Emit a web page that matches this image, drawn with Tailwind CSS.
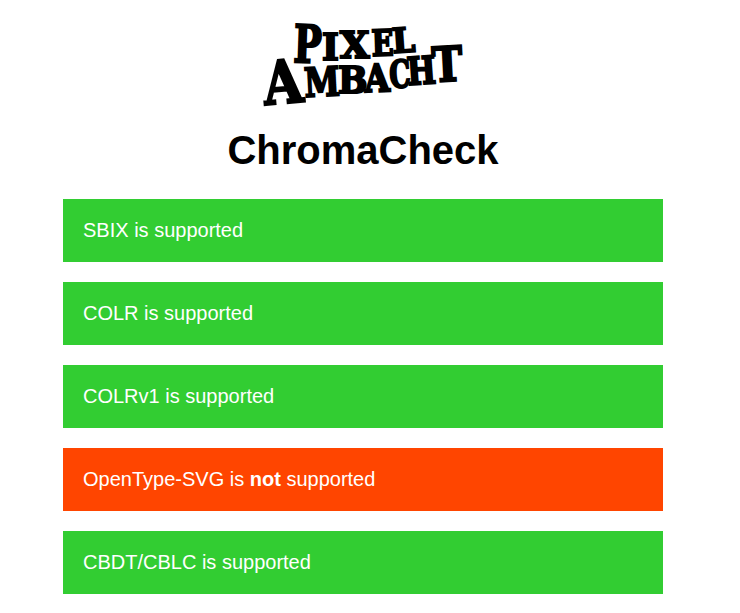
<!DOCTYPE html>
<html lang="en">
<head>
    <meta charset="UTF-8">
    <meta name="viewport" content="width=device-width, initial-scale=1.0">
    <title>ChromaCheck</title>
    <script src="https://cdn.jsdelivr.net/npm/@tailwindcss/browser@4"></script>
</head>
<body class="bg-white text-black font-['Liberation_Sans',Arial,sans-serif]">
    <div class="w-[600px] ml-[63px]">
        <svg class="block mx-auto mt-[20px] w-[210px] h-[90px] overflow-visible" viewBox="0 0 210 90" role="img" aria-label="Pixel Ambacht logo">
            <g class="font-['DejaVu_Serif',serif] font-bold" fill="#000" stroke="#000" stroke-width="2.2" stroke-linejoin="miter">
                <text font-size="52" transform="translate(35 42) rotate(2) scale(.72 1)">P</text>
                <text font-size="38" transform="translate(64 40) scale(.95 1)">I</text>
                <text font-size="38" transform="translate(82 38) scale(1 1)">X</text>
                <text font-size="36" transform="translate(114 36) rotate(-2) scale(.8 1)">E</text>
                <text font-size="34" transform="translate(135 33) rotate(-4) scale(.95 1)">L</text>
                <text font-size="60" transform="translate(7 85) rotate(-5) scale(.85 1)">A</text>
                <text font-size="40" transform="translate(47 77) rotate(-3) scale(.8 1)">M</text>
                <text font-size="38" transform="translate(80 73) scale(.92 1)">B</text>
                <text font-size="38" transform="translate(107 72) rotate(-2) scale(.85 1)">A</text>
                <text font-size="38" transform="translate(132 68) rotate(-3) scale(.7 1)">C</text>
                <text font-size="38" transform="translate(150 65) rotate(-4) scale(.8 1)">H</text>
                <text font-size="48" transform="translate(175 62) rotate(-3) scale(.85 1)">T</text>
            </g>
        </svg>
        <h1 class="mt-[17px] text-center text-[40px] leading-[46px] font-bold">ChromaCheck</h1>
        <div class="mt-[26px] flex flex-col gap-5">
            <div class="p-5 bg-[#32cd32] text-white text-[20px] leading-[23px]">SBIX is supported</div>
            <div class="p-5 bg-[#32cd32] text-white text-[20px] leading-[23px]">COLR is supported</div>
            <div class="p-5 bg-[#32cd32] text-white text-[20px] leading-[23px]">COLRv1 is supported</div>
            <div class="p-5 bg-[#ff4500] text-white text-[20px] leading-[23px]">OpenType-SVG is <b>not</b> supported</div>
            <div class="p-5 bg-[#32cd32] text-white text-[20px] leading-[23px]">CBDT/CBLC is supported</div>
        </div>
    </div>
</body>
</html>
